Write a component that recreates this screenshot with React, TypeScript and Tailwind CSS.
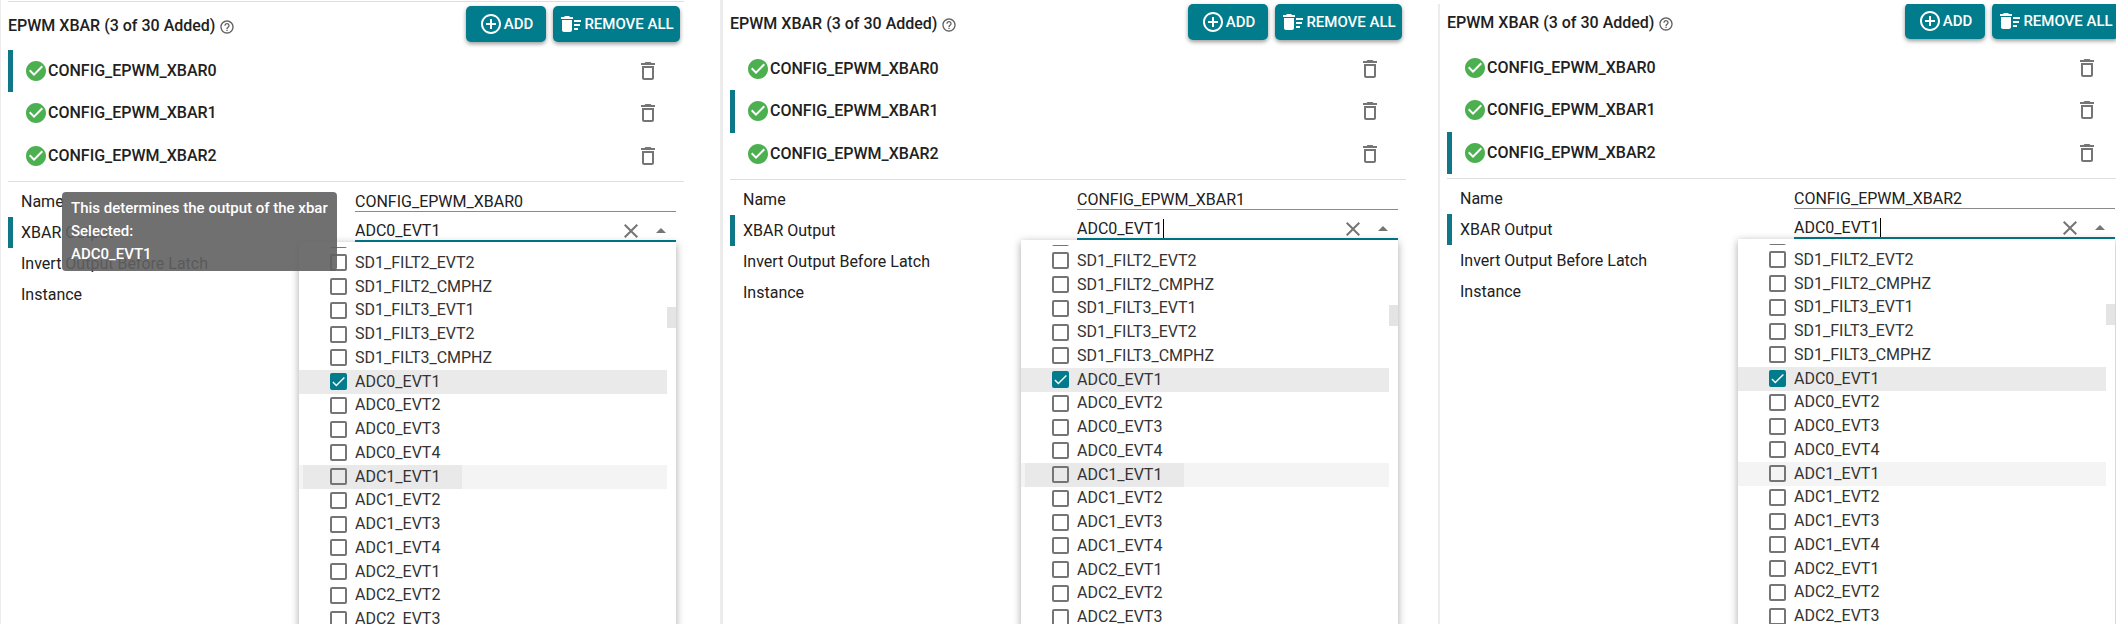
import { useId } from "react";
import {
  MdAddCircleOutline,
  MdArrowDropUp,
  MdCheck,
  MdCheckCircle,
  MdClose,
  MdDeleteOutline,
  MdDeleteSweep,
  MdHelpOutline,
} from "react-icons/md";

const instances = ["CONFIG_EPWM_XBAR0", "CONFIG_EPWM_XBAR1", "CONFIG_EPWM_XBAR2"];

const options = [
  "SD1_FILT2_EVT2",
  "SD1_FILT2_CMPHZ",
  "SD1_FILT3_EVT1",
  "SD1_FILT3_EVT2",
  "SD1_FILT3_CMPHZ",
  "ADC0_EVT1",
  "ADC0_EVT2",
  "ADC0_EVT3",
  "ADC0_EVT4",
  "ADC1_EVT1",
  "ADC1_EVT2",
  "ADC1_EVT3",
  "ADC1_EVT4",
  "ADC2_EVT1",
  "ADC2_EVT2",
  "ADC2_EVT3",
];

const SELECTED = "ADC0_EVT1";
const HOVERED = "ADC1_EVT1";

function Option({ name, ripple }: { name: string; ripple: boolean }) {
  const checked = name === SELECTED;
  const hovered = name === HOVERED;
  const row = checked ? "bg-[#eaeaea]" : hovered ? "bg-[#f4f4f4]" : "";
  return (
    <li className={`flex min-h-0 pl-1 ${row}`}>
      <label
        className={`flex w-[159px] items-center gap-2 pl-[27px] whitespace-nowrap ${
          hovered && ripple ? "bg-[#e9e9e9]" : ""
        }`}
      >
        <span className="grid shrink-0 place-items-center">
          <input
            type="checkbox"
            defaultChecked={checked}
            className="col-start-1 row-start-1 size-[17px] appearance-none rounded-xs border-2 border-[#757575] checked:border-[#007c8c] checked:bg-[#007c8c]"
          />
          {checked && (
            <MdCheck className="pointer-events-none col-start-1 row-start-1 size-[17px] text-white" />
          )}
        </span>
        {name}
      </label>
    </li>
  );
}

function Dropdown({ ripple }: { ripple: boolean }) {
  return (
    <div className="absolute top-[25px] right-0 -left-14 z-10 flex bg-white pt-[5px] text-[#333] shadow-[0_2px_8px_rgba(0,0,0,0.35)]">
      <ul className="min-w-0 flex-1">
        <li className="flex h-1 items-end overflow-hidden pl-[31px]">
          <input
            type="checkbox"
            aria-label="SD1_FILT2_EVT1"
            className="mb-[3px] size-[17px] shrink-0 appearance-none rounded-xs border-2 border-[#757575]"
          />
        </li>
        <li>
          <ul className="grid h-[380px] auto-rows-fr">
            {options.map((name) => (
              <Option key={name} name={name} ripple={ripple} />
            ))}
          </ul>
        </li>
      </ul>
      <div className="w-[9px] pt-[60px]">
        <div className="h-[21px] bg-[#e4e4e4]" />
      </div>
    </div>
  );
}

function Tooltip() {
  return (
    <div
      role="tooltip"
      className="absolute top-[10px] left-[54px] z-20 rounded-sm bg-[#616161]/90 px-[9px] py-[5px] text-[15px] leading-[23px] font-medium whitespace-nowrap text-white"
    >
      <p>This determines the output of the xbar</p>
      <p>Selected:</p>
      <p>ADC0_EVT1</p>
    </div>
  );
}

type PanelProps = {
  active: number;
  tooltip?: boolean;
  caret?: boolean;
  ripple?: boolean;
};

function Panel({ active, tooltip = false, caret = false, ripple = false }: PanelProps) {
  const id = useId();
  return (
    <>
      <header className="flex h-9 items-center gap-[7px] pr-1">
        <h2 className="flex flex-1 items-center gap-1 pt-[3px] font-medium whitespace-nowrap">
          EPWM XBAR (3 of 30 Added)
          <MdHelpOutline className="mt-[3px] size-4 text-[#616161]" />
        </h2>
        <button className="flex h-9 w-20 items-center justify-center gap-px rounded-[5px] bg-[#007c8c] text-[15px] font-medium text-white shadow-[0_2px_4px_rgba(0,0,0,0.4)]">
          <MdAddCircleOutline className="size-6" />
          ADD
        </button>
        <button className="flex h-9 w-[127px] items-center justify-center gap-px rounded-[5px] bg-[#007c8c] text-[15px] font-medium whitespace-nowrap text-white shadow-[0_2px_4px_rgba(0,0,0,0.4)]">
          <MdDeleteSweep className="size-6" />
          REMOVE ALL
        </button>
      </header>

      <ul className="mt-2 grid h-[127px] grid-rows-3 font-medium">
        {instances.map((name, i) => (
          <li
            key={name}
            className={`flex items-center border-l-5 pr-6 pl-[11px] ${
              i === active ? "border-[#0f7888]" : "border-transparent"
            }`}
          >
            <MdCheckCircle className="size-6 text-[#4caf50]" />
            <span className="flex-1">{name}</span>
            <button aria-label={`Remove ${name}`} className="text-[#757575]">
              <MdDeleteOutline className="size-6" />
            </button>
          </li>
        ))}
      </ul>

      <div className="relative mt-1 border-t border-[#dedede] pt-1">
        <div className="grid h-[31px] grid-cols-[347fr_321fr] pr-2">
          <label htmlFor={`${id}name`} className="flex items-center border-l-5 border-transparent pl-2">
            Name
          </label>
          <input
            id={`${id}name`}
            defaultValue={instances[active]}
            className="h-[26px] min-w-0 border-b border-[#8a8a8a] pt-[6px] outline-none"
          />
        </div>
        <div className="grid h-[31px] grid-cols-[347fr_321fr] pr-2">
          <label htmlFor={`${id}output`} className="flex items-center border-l-5 border-[#0f7888] pl-2">
            XBAR Output
          </label>
          <div className="relative min-w-0">
            <div className="flex h-[25px] items-center border-b-2 border-[#007c8c] text-[#757575]">
              <input
                id={`${id}output`}
                defaultValue={SELECTED}
                className="h-full min-w-0 flex-1 pt-[3px] text-[#212121] outline-none"
              />
              <button aria-label="Clear" className="pt-1">
                <MdClose className="size-6" />
              </button>
              <button aria-label="Close list" className="pt-1 pr-[3px] pl-[6px]">
                <MdArrowDropUp className="size-6" />
              </button>
            </div>
            {caret && <span className="absolute top-[4px] left-[86px] h-[19px] w-px bg-black" />}
            <Dropdown ripple={ripple} />
          </div>
        </div>
        <div className="flex h-[31px] items-center pl-[13px]">Invert Output Before Latch</div>
        <div className="flex h-[31px] items-center pl-[13px]">Instance</div>
        {tooltip && <Tooltip />}
      </div>
    </>
  );
}

export default function App() {
  return (
    <main className="grid h-screen grid-cols-[720fr_718fr_690fr] overflow-hidden bg-white font-[Roboto,sans-serif] text-base text-[#212121]">
      <section className="min-w-0 border-l border-[#ececec] pt-px pr-9 pl-[7px]">
        <div className="border-t border-[#dedede] pt-1">
          <Panel active={0} tooltip ripple />
        </div>
      </section>
      <section className="min-w-0 border-l-3 border-[#ececec] pt-1 pr-8 pl-[7px]">
        <Panel active={1} caret ripple />
      </section>
      <section className="mt-1 mr-3 min-w-0 overflow-hidden border-l-2 border-[#ececec] pl-[7px]">
        <div className="-mt-px -mr-[7px]">
          <Panel active={2} caret />
        </div>
      </section>
    </main>
  );
}
